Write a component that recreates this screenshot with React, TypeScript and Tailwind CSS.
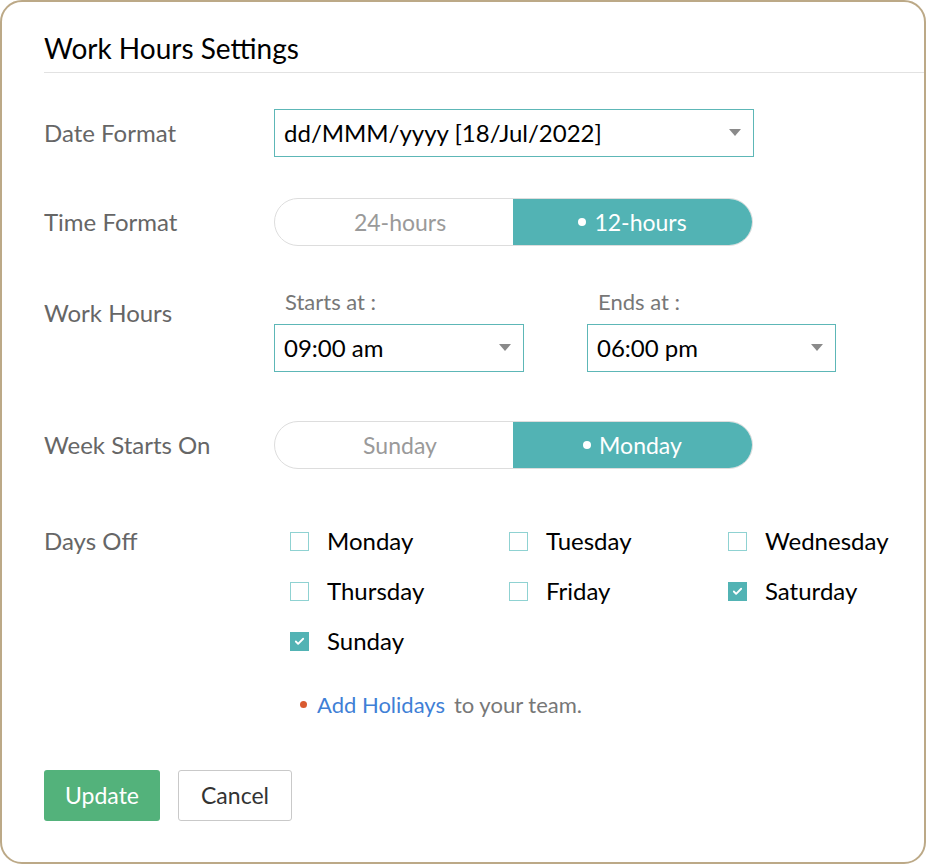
import { Check } from 'lucide-react'

const days = [
  { name: 'Monday', off: false },
  { name: 'Tuesday', off: false },
  { name: 'Wednesday', off: false },
  { name: 'Thursday', off: false },
  { name: 'Friday', off: false },
  { name: 'Saturday', off: true },
  { name: 'Sunday', off: true },
]

function Caret() {
  return (
    <svg width="12" height="8" viewBox="0 0 12 8" className="shrink-0">
      <path d="M0 0 H12 L6 7 Z" fill="#8a8a8a" />
    </svg>
  )
}

function Select({ value, width }: { value: string; width: string }) {
  return (
    <div
      className={`${width} h-[48px] border-[1.5px] border-[#5db7b7] flex items-center justify-between pl-[9px] pr-[12px] text-[24px] text-black`}
    >
      <span>{value}</span>
      <Caret />
    </div>
  )
}

function Toggle({ left, right }: { left: string; right: string }) {
  return (
    <div className="w-[479px] h-[48px] rounded-full border-[1.5px] border-[#dddddd] flex overflow-hidden text-[23px]">
      <div className="flex-1 flex items-center justify-center pl-[12px] text-[#9a9a9a]">{left}</div>
      <div className="w-[239px] bg-[#52b3b4] flex items-center justify-center text-white gap-[8px]">
        <span className="w-[8px] h-[8px] rounded-full bg-white" />
        <span>{right}</span>
      </div>
    </div>
  )
}

function Label({ children }: { children: string }) {
  return <div className="w-[230px] shrink-0 text-[24px] text-[#666666] leading-[30px]">{children}</div>
}

export default function App() {
  return (
    <div
      className="w-[926px] h-[864px] bg-white border-2 border-[#bca987] rounded-[22px] overflow-hidden"
      style={{ fontFamily: 'Lato, "Noto Sans", sans-serif' }}
    >
      <div className="ml-[42px] pt-[29px] pb-[7px] border-b border-[#e2e2e2]">
        <h1 className="text-[28px] leading-[34px] text-black">Work Hours Settings</h1>
      </div>

      <div className="pl-[42px]">
        <div className="flex items-center mt-[36px]">
          <Label>Date Format</Label>
          <Select value="dd/MMM/yyyy [18/Jul/2022]" width="w-[480px]" />
        </div>

        <div className="flex items-center mt-[41px]">
          <Label>Time Format</Label>
          <Toggle left="24-hours" right="12-hours" />
        </div>

        <div className="flex mt-[44px]">
          <div className="pt-[8px]">
            <Label>Work Hours</Label>
          </div>
          <div className="flex gap-[63px]">
            <div>
              <div className="text-[22px] leading-[24px] text-[#777777] pl-[11px] mb-[10px]">Starts at :</div>
              <Select value="09:00 am" width="w-[250px]" />
            </div>
            <div>
              <div className="text-[22px] leading-[24px] text-[#777777] pl-[11px] mb-[10px]">Ends at :</div>
              <Select value="06:00 pm" width="w-[249px]" />
            </div>
          </div>
        </div>

        <div className="flex items-center mt-[49px]">
          <Label>Week Starts On</Label>
          <Toggle left="Sunday" right="Monday" />
        </div>

        <div className="flex mt-[57px]">
          <Label>Days Off</Label>
          <div className="pl-[16px]">
            <div className="grid grid-cols-[219px_219px_auto] gap-y-[20px]">
              {days.map((d) => (
                <div key={d.name} className="flex items-center h-[30px] gap-[18px]">
                  {d.off ? (
                    <span className="w-[19px] h-[19px] bg-[#52b3b4] flex items-center justify-center">
                      <Check className="w-[11px] h-[11px] text-white" strokeWidth={4} />
                    </span>
                  ) : (
                    <span className="w-[19px] h-[19px] border-[1.5px] border-[#8fd2d2] bg-white" />
                  )}
                  <span className="text-[24px] text-black">{d.name}</span>
                </div>
              ))}
            </div>
            <div className="flex items-center mt-[34px] h-[28px] text-[22px]">
              <span className="w-[7px] h-[7px] rounded-full bg-[#d95a30] ml-[10px] mr-[10px]" />
              <span className="text-[#3f7fd6]">Add Holidays</span>
              <span className="text-[#777777] ml-[9px]">to your team.</span>
            </div>
          </div>
        </div>

        <div className="flex gap-[18px] mt-[52px]">
          <button className="w-[116px] h-[51px] bg-[#53b27b] rounded-[3px] text-white text-[23px]">Update</button>
          <button className="w-[114px] h-[51px] bg-white border-[1.5px] border-[#c9c9c9] rounded-[3px] text-[#333333] text-[23px]">
            Cancel
          </button>
        </div>
      </div>
    </div>
  )
}
